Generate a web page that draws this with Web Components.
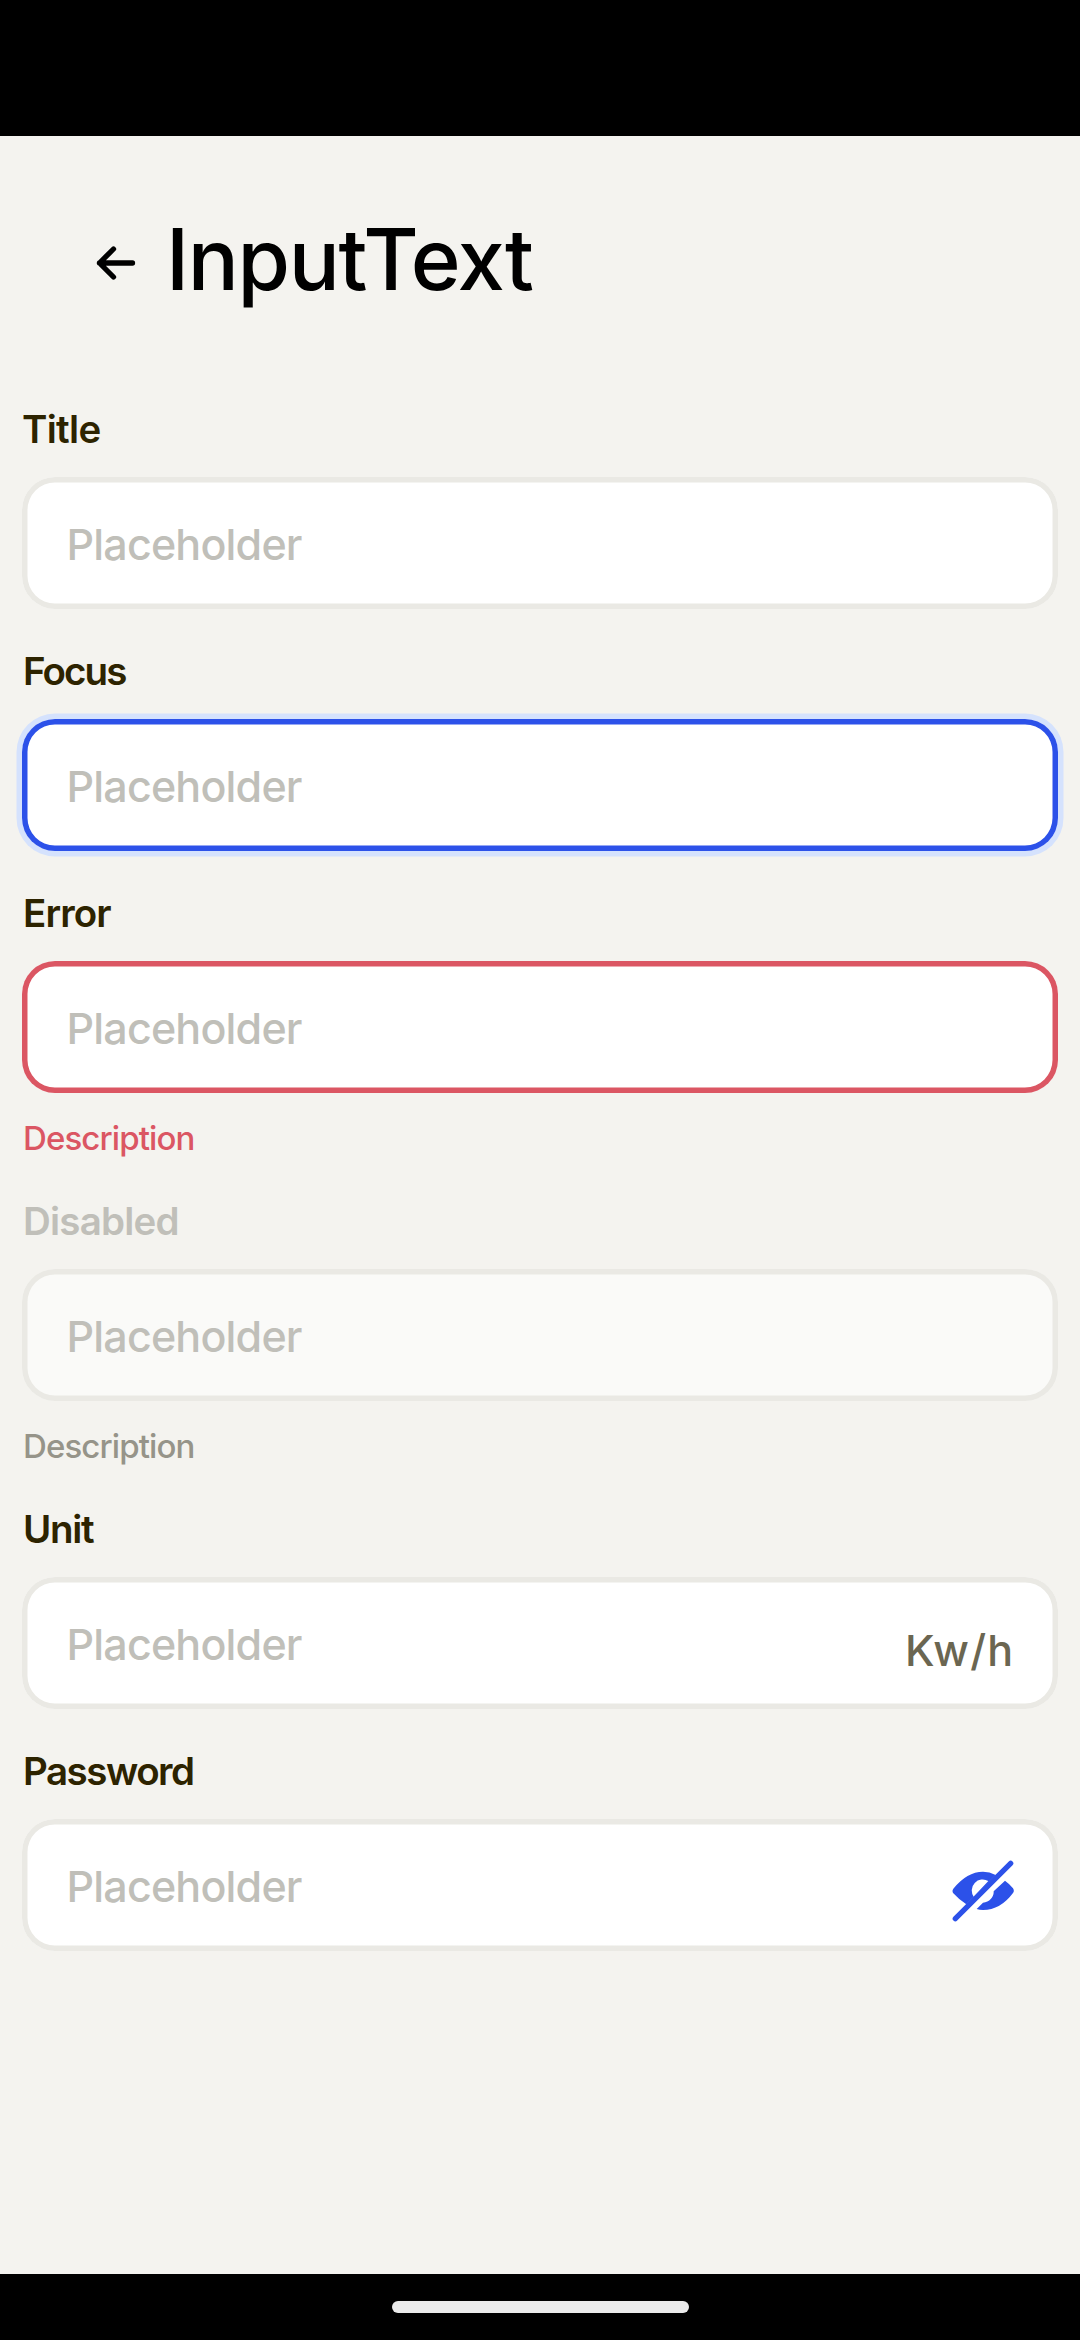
<!DOCTYPE html>
<html lang="en"><head><meta charset="utf-8"><title>InputText</title>
<style>html,body{margin:0;background:#f4f3ef}body{font-family:Inter,"Liberation Sans",sans-serif}</style></head>
<body>
<app-screen>
<screen-header slot="header">InputText</screen-header>
<input-text style="--ls:-.7px;--x:0px" label="Title"></input-text>
<input-text style="--ls:-1.9px" label="Focus" state="focus"></input-text>
<input-text style="--ls:-.87px" label="Error" state="error" description="Description"></input-text>
<input-text style="--ls:-.8px" label="Disabled" state="disabled" description="Description"></input-text>
<input-text style="--ls:-1.3px" label="Unit"><unit-label slot="end">Kw/h</unit-label></input-text>
<input-text style="--ls:-1.5px" label="Password"><eye-off-icon slot="end"></eye-off-icon></input-text>
</app-screen>
<script>
const define=(name,html,init)=>customElements.define(name,class extends HTMLElement{
  connectedCallback(){ if(this.shadowRoot)return; const r=this.attachShadow({mode:'open'}); r.innerHTML=html; if(init)init(this,r); }
});
define('app-screen',`<style>
:host{display:flex;flex-direction:column;height:2340px;background:#f4f3ef}
.status{height:136px;background:#000;flex:none}
main{flex:1;display:flex;flex-direction:column;gap:40px;padding:0 22px}
.nav{height:66px;flex:none;background:#000;display:flex;justify-content:center;align-items:center}
.pill{width:297px;height:11.5px;border-radius:6px;background:#ebebeb}
</style><div class="status"></div><slot name="header"></slot><main><slot></slot></main><div class="nav"><div class="pill"></div></div>`);
define('screen-header',`<style>
:host{display:flex;height:271px;box-sizing:border-box;padding:68px 0 0 96px;align-items:flex-start}
svg{width:40px;height:36px;margin-top:41px;flex:none}
h1{margin:1px 0 0 30px;font-size:85px;line-height:110px;font-weight:450;letter-spacing:-1.36px;color:#000;white-space:nowrap}
</style><svg viewBox="0 0 40 36" fill="none" stroke="#000" stroke-width="5.3" stroke-linecap="round" stroke-linejoin="round"><path d="M17.5 4 3.5 18l14 14M3.5 18h33"/></svg><h1><slot></slot></h1>`);
define('input-text',`<style>
:host{display:flex;flex-direction:column;--line:#eae9e4;--halo:transparent}
.label{font-size:38.5px;line-height:44px;font-weight:600;letter-spacing:var(--ls);padding-left:var(--x,1px);color:#2d2300;white-space:nowrap}
.box{margin-top:26px;height:132px;box-sizing:border-box;border-radius:33px;background:#fff;box-shadow:inset 0 0 0 5.5px var(--line),0 0 0 5.5px var(--halo);display:flex;align-items:center;justify-content:space-between;padding:0 44.5px}
.ph{font-size:43px;line-height:52px;font-weight:450;letter-spacing:-.81px;color:#c0bfb9;white-space:nowrap;padding-top:2px}
.desc{margin:24px 0 -1px;padding-left:1px;font-size:33px;line-height:43px;font-weight:450;letter-spacing:-.88px;color:#969489}
:host([state=focus]){--line:#2c51e9;--halo:#d5e2fd}
:host([state=error]){--line:#db5663}
:host([state=error]) .desc{color:#db5663}
:host([state=disabled]) .box{background:#fafaf8}
:host([state=disabled]) .label{color:#c0bfb9}
</style><div class="label"></div><div class="box"><div class="ph">Placeholder</div><slot name="end"></slot></div>`,(el,r)=>{
  r.querySelector('.label').textContent=el.getAttribute('label');
  const d=el.getAttribute('description');
  if(d){const n=document.createElement('div');n.className='desc';n.textContent=d;r.append(n);}
});
define('unit-label',`<style>:host{display:block;font-size:43px;line-height:52px;font-weight:450;letter-spacing:1.3px;margin-right:-1px;color:#6b6651;padding-top:14px;white-space:nowrap}</style><slot></slot>`);
define('eye-off-icon',`<style>:host{display:block;width:62px;height:62px;padding-top:12px}svg{display:block;width:62px;height:62px}</style>
<svg viewBox="90 180 186 186" fill="#2c51e9"><path fill-rule="evenodd" d="M94 266Q135 215 183 215Q203 215 221 225L133 313Q112 300 94 280Q89 273 94 266ZM199 243A33 33 0 0 0 155 290Z"/><path d="M249 242Q262 251 273 265Q278 272 273 279Q235 330 183 330Q172 330 164 327L183 308C203 306 216 290 215 274Z"/><path d="M100 356 266 190" stroke="#2c51e9" stroke-width="16" stroke-linecap="round"/></svg>`);
</script></body></html>
